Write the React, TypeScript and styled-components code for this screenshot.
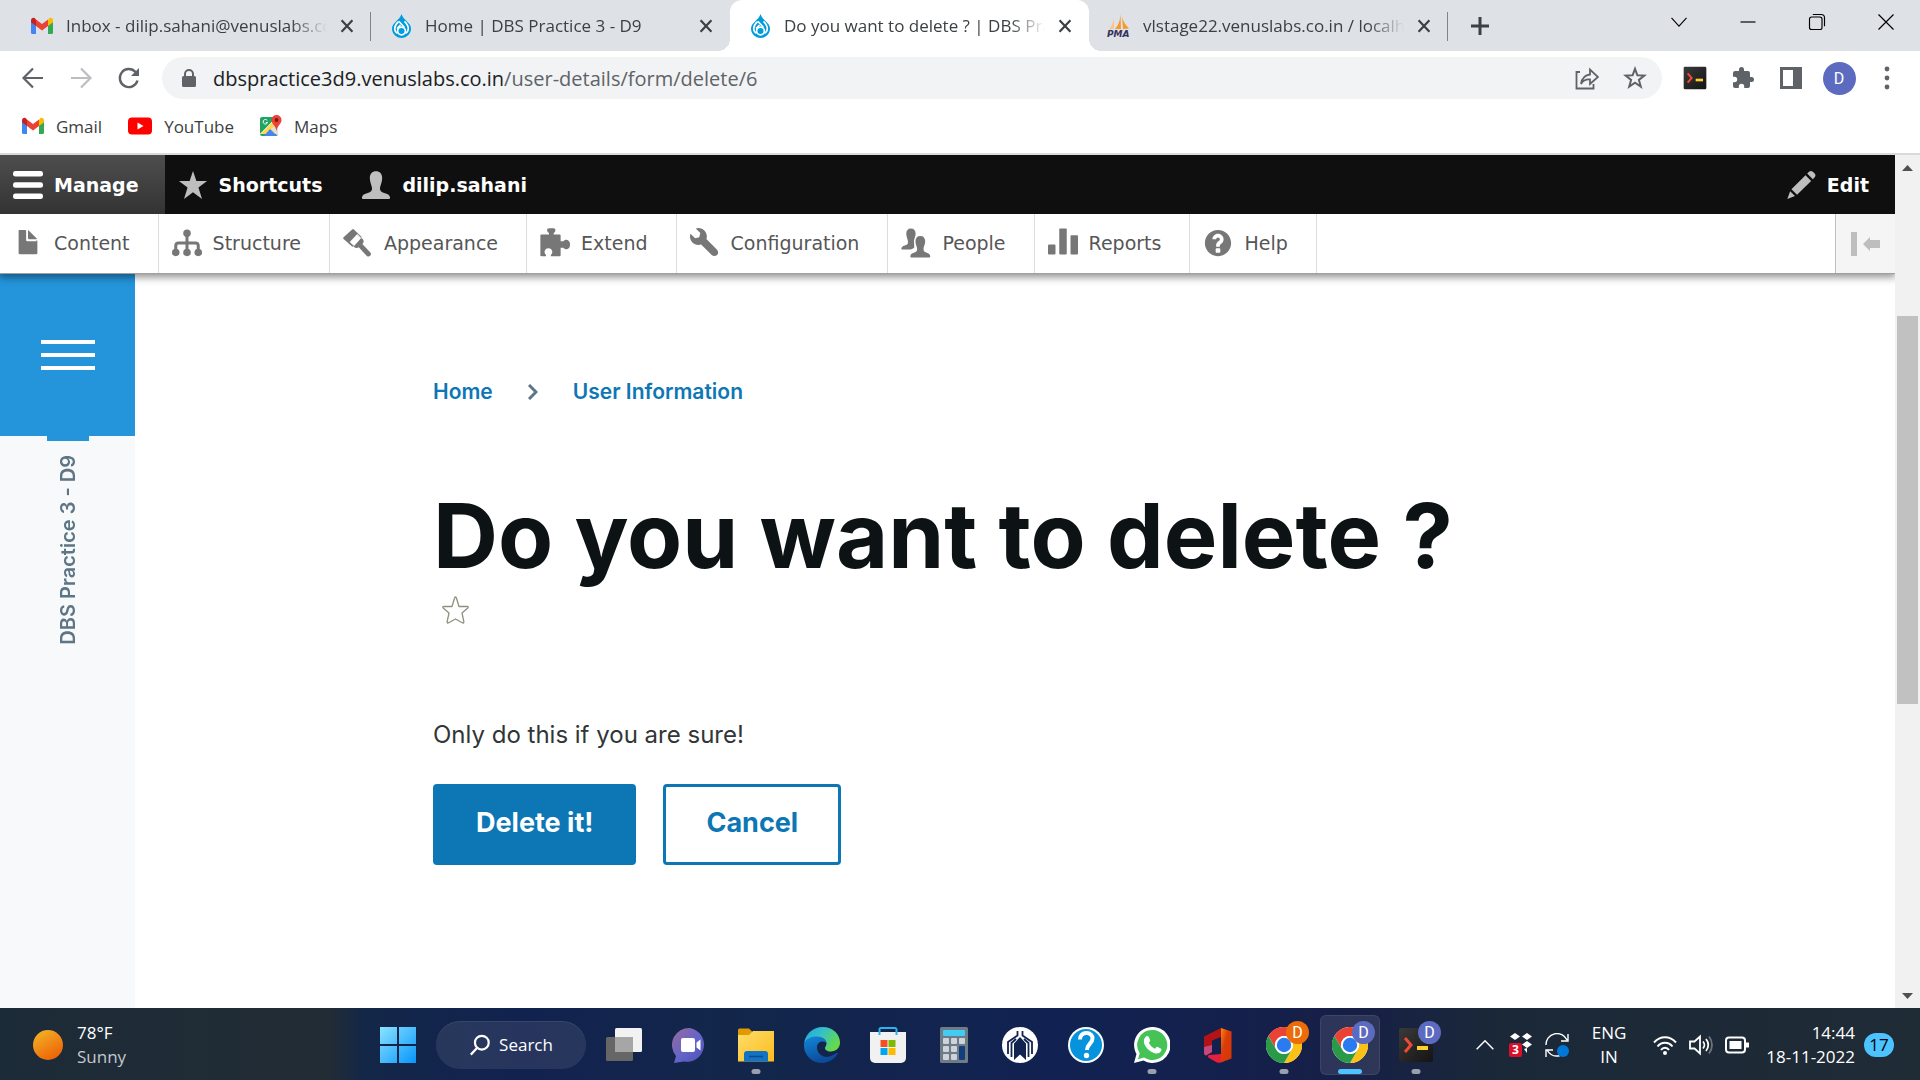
import React from "react";
import styled, { createGlobalStyle, css } from "styled-components";

const uiFont = `"Open Sans", "Noto Sans", sans-serif`;
const adminFont = `"DejaVu Sans", Verdana, sans-serif`;
const siteFont = `Inter, "Open Sans", sans-serif`;

const GlobalStyle = createGlobalStyle`
  *, *::before, *::after { box-sizing: border-box; }
  body { margin: 0; background: #fff; font-family: ${uiFont}; }
  button, input { font: inherit; color: inherit; border: 0; padding: 0; background: none; }
  button { cursor: pointer; }
  a { color: inherit; text-decoration: none; }
  svg { display: block; flex: none; }
  ul, ol { list-style: none; margin: 0; padding: 0; }
`;

const Screen = styled.div`
  display: flex;
  flex-direction: column;
  min-height: 100vh;
`;

/* ---------- browser: tab strip ---------- */

const TabStrip = styled.div`
  display: flex;
  height: 51px;
  padding-left: 12px;
  background: #dee1e6;
  color: #3c4043;
`;

const Tab = styled.div<{ $active?: boolean; $divided?: boolean }>`
  display: flex;
  align-items: center;
  flex: 0 1 359px;
  min-width: 0;
  padding: 0 12px 0 18px;
  font-size: 17px;
  position: relative;
  ${(p) =>
    p.$divided &&
    css`
      &::after {
        content: "";
        position: absolute;
        right: 0;
        top: 12px;
        width: 1px;
        height: 29px;
        background: #808489;
      }
    `}
  ${(p) =>
    p.$active &&
    css`
      background: #fff;
      border-radius: 12px 12px 0 0;
      &::before,
      &::after {
        content: "";
        position: absolute;
        bottom: 0;
        width: 12px;
        height: 12px;
      }
      &::before {
        left: -12px;
        background: radial-gradient(circle at 0 0, transparent 12px, #fff 12px);
      }
      &::after {
        right: -12px;
        background: radial-gradient(circle at 100% 0, transparent 12px, #fff 12px);
      }
    `}
`;

const Favicon = styled.span`
  display: grid;
  place-items: center;
  width: 24px;
  flex: none;
`;

const TabTitle = styled.span`
  flex: 1;
  min-width: 0;
  margin: 0 8px 0 12px;
  overflow: hidden;
  white-space: nowrap;
  mask-image: linear-gradient(to right, #000 calc(100% - 36px), transparent);
`;

const TabButton = styled.button`
  display: grid;
  place-items: center;
  width: 24px;
  height: 24px;
`;

const NewTab = styled(TabButton)`
  width: 64px;
  height: 51px;
`;

const WindowControls = styled.div`
  display: flex;
  margin-left: auto;
  height: 44px;
  color: #000;
`;

const WindowButton = styled.button`
  display: grid;
  place-items: center;
  width: 69px;
`;

/* ---------- browser: address bar ---------- */

const AddressRow = styled.div`
  display: flex;
  align-items: center;
  height: 54px;
  padding: 0 9px;
  background: #fff;
  color: #5f6368;
`;

const ToolButton = styled.button`
  display: grid;
  place-items: center;
  width: 48px;
  height: 48px;
`;

const AddressBox = styled.label`
  display: flex;
  align-items: center;
  flex: 1;
  height: 42px;
  margin: 0 9px;
  padding: 0 3px 0 18px;
  border-radius: 21px;
  background: #f1f3f4;
  font-size: 20px;
`;

const Host = styled.span`
  margin-left: 15px;
  color: #202124;
`;

const PathInput = styled.input`
  flex: 1;
  min-width: 0;
  outline: 0;
  color: #5f6368;
`;

const Avatar = styled.span<{ $color: string; $size: number }>`
  display: grid;
  place-items: center;
  width: ${(p) => p.$size}px;
  height: ${(p) => p.$size}px;
  border-radius: 50%;
  background: ${(p) => p.$color};
  color: #fff;
  font-family: Roboto, sans-serif;
  font-size: 16px;
`;

const Bookmarks = styled.nav`
  display: flex;
  align-items: center;
  gap: 26px;
  height: 50px;
  padding: 0 22px 6px;
  border-bottom: 2px solid #dadada;
  background: #fff;
  color: #3c4043;
  font-size: 17px;
`;

const Bookmark = styled.a`
  display: flex;
  align-items: center;
  gap: 12px;
`;

/* ---------- viewport ---------- */

const Viewport = styled.div`
  display: flex;
  flex: 1;
`;

const Page = styled.div`
  display: flex;
  flex-direction: column;
  flex: 1;
  min-width: 0;
  background: #fff;
`;

const ScrollTrack = styled.div`
  display: flex;
  flex-direction: column;
  align-items: center;
  width: 25px;
  padding: 10px 0 9px;
  background: #f1f1f1;
`;

const ScrollThumb = styled.div`
  width: 21px;
  flex: 388;
  background: #c1c1c1;
`;

const ScrollGap = styled.div<{ $grow: number }>`
  flex: ${(p) => p.$grow};
`;

/* ---------- admin toolbar ---------- */

const AdminToolbar = styled.header`
  position: relative;
  z-index: 1;
  font-family: ${adminFont};
  font-size: 19px;
  box-shadow: 0 1px 0 #a0a0a0, 0 3px 8px 1px rgba(0, 0, 0, 0.45);
  clip-path: inset(0 0 -16px 0);
`;

const AdminBar = styled.nav`
  display: flex;
  height: 59px;
  background: #0f0f0f;
  color: #fff;
  font-weight: 700;
`;

const AdminTab = styled.button<{ $open?: boolean; $end?: boolean }>`
  display: flex;
  align-items: center;
  gap: 11px;
  padding: 0 26px 0 13px;
  margin-left: ${(p) => (p.$end ? "auto" : "0")};
  background: ${(p) => (p.$open ? "linear-gradient(#4e4e4e, #333)" : "none")};
`;

const AdminTray = styled.nav`
  display: flex;
  height: 59px;
  background: #fff;
  color: #565656;
`;

const TrayList = styled.ul`
  display: flex;
  flex: 1;
`;

const TrayLink = styled.a`
  display: flex;
  align-items: center;
  gap: 11px;
  height: 100%;
  padding: 0 28px 2px 13px;
  border-right: 1px solid #ddd;
`;

const TrayToggle = styled.button`
  display: grid;
  place-items: center;
  width: 60px;
  border-left: 1px solid #bfbfbf;
  background: #f5f5f5;
`;

/* ---------- site ---------- */

const SiteBody = styled.div`
  display: flex;
  flex: 1;
  font-family: ${siteFont};
`;

const SiteRail = styled.aside`
  display: flex;
  flex-direction: column;
  align-items: center;
  width: 135px;
  background: #f7f9fa;
`;

const RailButton = styled.button`
  display: flex;
  flex-direction: column;
  align-items: center;
  justify-content: center;
  gap: 9px;
  width: 100%;
  height: 163px;
  background: #2494db;
`;

const RailBar = styled.span`
  width: 54px;
  height: 4px;
  background: #fff;
`;

const RailNotch = styled.span`
  width: 42px;
  height: 5px;
  background: #2494db;
`;

const RailName = styled.a`
  margin-top: 14px;
  writing-mode: vertical-rl;
  transform: rotate(180deg);
  color: #5d7585;
  font-size: 20px;
  font-weight: 600;
  line-height: 24px;
`;

const Main = styled.main`
  flex: 1;
  padding: 103px 48px 0 298px;
`;

const Crumbs = styled.ol`
  display: flex;
  align-items: center;
  gap: 35px;
  color: #0d77b5;
  font-size: 21px;
  font-weight: 600;
  line-height: 32px;
`;

const Title = styled.h1`
  margin: 74px 0 0;
  color: #0d1214;
  font-size: 90px;
  font-weight: 700;
  line-height: 108px;
`;

const Favourite = styled.button`
  display: block;
  margin: 6px 9px 0;
  height: 28px;
`;

const Message = styled.p`
  margin: 95px 0 0;
  color: #313637;
  font-size: 24px;
  line-height: 32px;
`;

const Actions = styled.div`
  display: flex;
  gap: 27px;
  margin-top: 33px;
`;

const Action = styled.button<{ $primary?: boolean }>`
  height: 81px;
  padding: 0 40px 4px;
  border: 3px solid #0d77b5;
  border-radius: 4px;
  background: ${(p) => (p.$primary ? "#0d77b5" : "#fff")};
  color: ${(p) => (p.$primary ? "#fff" : "#0d77b5")};
  font-size: 27px;
  font-weight: 700;
`;

/* ---------- taskbar ---------- */

const Taskbar = styled.footer`
  display: flex;
  align-items: stretch;
  height: 72px;
  padding: 2px 26px 0 33px;
  background: linear-gradient(90deg, #1c2b38 0, #222c34 17%, #132748 19%, #12224f 27%, #13264a 38%, #112252 55%, #161f47 70%, #1b2838 78%, #1f2b35 100%);
  color: #fff;
  font-size: 17px;
  line-height: 24px;
`;

const Weather = styled.button`
  display: flex;
  align-items: center;
  gap: 14px;
  text-align: left;
`;

const Stack = styled.span<{ $align?: string }>`
  display: flex;
  flex-direction: column;
  text-align: ${(p) => p.$align || "left"};
`;

const Muted = styled.span`
  color: #c4c8cb;
`;

const Apps = styled.div`
  display: flex;
  align-items: center;
  margin: 0 18px 0 auto;
`;

const AppSlot = styled.button<{ $active?: boolean }>`
  position: relative;
  display: grid;
  place-items: center;
  width: 60px;
  height: 60px;
  margin: 0 3px;
  border-radius: 6px;
  background: ${(p) => (p.$active ? "rgba(255,255,255,0.1)" : "none")};
  box-shadow: ${(p) => (p.$active ? "inset 0 0 0 1px rgba(255,255,255,0.08)" : "none")};
`;

const RunMark = styled.span<{ $active?: boolean }>`
  position: absolute;
  bottom: 1px;
  left: 50%;
  width: ${(p) => (p.$active ? 24 : 9)}px;
  height: 5px;
  transform: translateX(-50%);
  border-radius: 3px;
  background: ${(p) => (p.$active ? "#4cc2ff" : "#9a9fae")};
`;

const AppBadge = styled.span`
  position: absolute;
  top: 6px;
  right: 5px;
`;

const SearchButton = styled.button`
  display: flex;
  align-items: center;
  justify-content: center;
  gap: 8px;
  width: 150px;
  height: 48px;
  margin: 0 5px;
  border-radius: 24px;
  background: rgba(255, 255, 255, 0.09);
  box-shadow: inset 0 1px 0 rgba(255, 255, 255, 0.08);
`;

const Tray = styled.div`
  display: flex;
  align-items: center;
`;

const TrayButton = styled.button<{ $width?: number; $end?: boolean }>`
  display: grid;
  place-items: center;
  justify-items: ${(p) => (p.$end ? "end" : "center")};
  width: ${(p) => p.$width || 36}px;
  height: 60px;
`;

const StatusGroup = styled.div`
  display: flex;
  padding-left: 4px;
`;

const Count = styled.span`
  display: grid;
  place-items: center;
  width: 30px;
  height: 24px;
  margin-left: 9px;
  border-radius: 12px;
  background: #4cc2ff;
  color: #000;
`;

/* ---------- icons ---------- */

const Stroke = ({ size = 24, w = 2, children }: { size?: number; w?: number; children: React.ReactNode }) => (
  <svg width={size} height={size} viewBox="0 0 24 24" fill="none" stroke="currentColor" strokeWidth={w} aria-hidden>
    {children}
  </svg>
);

const GmailIcon = () => (
  <svg width="22" height="22" viewBox="0 0 22 22" aria-hidden>
    <path d="M0 5v12.500a1.500 1.500 0 0 0 1.500 1.500H5V8.500z" fill="#4285f4" />
    <path d="M22 5v12.500a1.500 1.500 0 0 1-1.500 1.500H17V8.500z" fill="#34a853" />
    <path d="M17 5v6l5-3.800V5.200c0-2-2.200-3.200-3.800-2z" fill="#fbbc04" />
    <path d="M5 11V4.500l6 4.500 6-4.500V11l-6 4.600z" fill="#ea4335" />
    <path d="M0 5.200v2L5 11V4.500L3.800 3.200C2.200 2 0 3.200 0 5.200z" fill="#c5221f" />
  </svg>
);

const DrupalIcon = () => (
  <svg width="19" height="24" viewBox="0 0 19 24" aria-hidden>
    <path d="M9.500 0c.8 3 3 5 5.200 7.200C17 9.400 19 11.500 19 14.600 19 20 14.700 24 9.500 24S0 20 0 14.600c0-3.100 2-5.200 4.300-7.400C6.500 5 8.700 3 9.500 0z" fill="#009cde" />
    <circle cx="9.500" cy="17" r="3.900" fill="none" stroke="#fff" strokeWidth="1.700" />
    <path d="M6.800 7.200l5.700 6.300M12.500 7.400c2 2 3.800 4 3.800 7 0 2-1 3.800-2.800 5M8.500 11L5 14.500M6.500 7.600c-2 1.800-3.800 4-3.800 6.800 0 2 1 3.800 2.800 5" fill="none" stroke="#fff" strokeWidth="1.600" />
  </svg>
);

const PmaIcon = () => (
  <svg width="24" height="24" viewBox="0 0 24 24" aria-hidden>
    <path d="M7 3C6.500 8 5 12 2 15.500l5-1z" fill="#f9c58a" />
    <path d="M13.500 0c-.5 7-2 11-5.500 15h6zM15 2c.5 5 3.500 9 7 12.500l-6 .5z" fill="#f7982b" />
    <text x="0" y="23" fontFamily="DejaVu Sans" fontSize="9" fontWeight="700" fontStyle="italic" fill="#33335c">PMA</text>
  </svg>
);

const CloseIcon = () => (
  <Stroke size={20} w={2.600}><path d="M5.500 5l13 14M18.500 5l-13 14" /></Stroke>
);

const YoutubeIcon = () => (
  <svg width="24" height="18" viewBox="0 0 24 18" aria-hidden>
    <rect y="0.500" width="24" height="17" rx="4" fill="#f00" />
    <path d="M9.500 5.500v7l6-3.500z" fill="#fff" />
  </svg>
);

const MapsIcon = () => (
  <svg width="22" height="22" viewBox="0 0 22 22" aria-hidden>
    <rect x="0" y="2" width="18" height="19" rx="2" fill="#1fa463" />
    <path d="M0 19L17 2v17z" fill="#ffd54a" />
    <path d="M4 21l6-7 7 7z" fill="#4285f4" />
    <path d="M18 8v11a2 2 0 0 1-.6 1.400L11 14z" fill="#e0e0e0" />
    <path d="M0 19.500L15 4" stroke="#fff" strokeWidth=".8" />
    <path d="M7.300 5.500A2.300 2.300 0 1 0 7.600 7.500H5.700" fill="none" stroke="#fff" strokeWidth="1" />
    <path d="M16.500 0a5 5 0 0 1 5 5c0 4-4 5-5 11-1-6-5-7-5-11a5 5 0 0 1 5-5z" fill="#ea4335" />
    <circle cx="16.500" cy="5" r="1.900" fill="#811411" />
  </svg>
);

const Solid = ({ size = 24, box = 24, children }: { size?: number; box?: number; children: React.ReactNode }) => (
  <svg width={size} height={size} viewBox={`0 0 ${box} ${box}`} fill="currentColor" aria-hidden>{children}</svg>
);

const PuzzlePath = "M20.500 11H19V7a2 2 0 0 0-2-2h-4V3.500a2.500 2.500 0 0 0-5 0V5H4a2 2 0 0 0-2 2v3.800h1.500a2.700 2.700 0 0 1 0 5.400H2V20a2 2 0 0 0 2 2h3.800v-1.500a2.700 2.700 0 0 1 5.400 0V22H17a2 2 0 0 0 2-2v-4h1.500a2.500 2.500 0 0 0 0-5z";

const TerminalIcon = ({ size }: { size: number }) => (
  <svg width={size} height={size} viewBox="0 0 36 36" aria-hidden>
    <defs><linearGradient id="term" x2="1" y2="1"><stop stopColor="#3a3a3a" /><stop offset="1" stopColor="#141414" /></linearGradient></defs>
    <rect x="1" y="1" width="34" height="34" rx="2" fill="url(#term)" />
    <path d="M7 11l6 7-6 7" fill="none" stroke="#f04b32" strokeWidth="3" />
    <rect x="19" y="19" width="11" height="4" fill="#ffd02e" />
  </svg>
);

const AdminIcon = ({ color, children }: { color: string; children: React.ReactNode }) => (
  <svg width="30" height="30" viewBox="0 0 16 16" fill={color} aria-hidden>{children}</svg>
);

const adminIcons = {
  menu: <><rect y="0.500" width="16" height="3" rx="1.300" /><rect y="6.500" width="16" height="3" rx="1.300" /><rect y="12.500" width="16" height="3" rx="1.300" /></>,
  star: <path d="M8 .5l1.800 5.300H15.500l-4.600 3.500 1.900 6.200L8 11.800l-4.800 3.700 1.900-6.200L.5 5.800h5.700z" />,
  person: <path d="M8 .6c2 0 3.300 1.300 3.300 3.700 0 2.500-1.200 4.200-1.200 5.600 0 1.500.9 2 2.700 2.500 1.700.4 2.500 1 2.700 2.300 0 .5-.2.800-.7.800H1.200c-.5 0-.7-.3-.7-.8.2-1.300 1-1.900 2.700-2.300 1.800-.5 2.700-1 2.700-2.500 0-1.400-1.200-3.100-1.200-5.600C4.700 1.900 6 .6 8 .6z" />,
  pencil: <><path d="M11.300 1.900l1-1c.6-.6 1.400-.5 2 0l1 1c.5.6.6 1.400 0 2l-1 1z" /><path d="M10.400 2.800l3 3-7.500 7.400-3-3zM2.200 11.300l2.600 2.600L.7 15.400z" /></>,
  content: <><path d="M12.502 7h-5c-.276 0-.502-.225-.502-.5v-5c0-.275-.225-.5-.5-.5h-3c-.275 0-.5.225-.5.5v12.029c0 .275.225.5.5.5h9.002c.275 0 .5-.225.5-.5v-6.529c0-.275-.225-.5-.5-.5z" /><path d="M8.502 6h4c.275 0 .34-.159.146-.354l-4.293-4.292c-.195-.195-.353-.129-.353.146v4c0 .275.225.5.5.500z" /></>,
  structure: <><circle cx="8" cy="2.800" r="2" /><circle cx="2" cy="13" r="2" /><circle cx="8" cy="13" r="2" /><circle cx="14" cy="13" r="2" /><path d="M7.200 4h1.600v9H7.200z" /><path d="M2 12.500V9.500c0-1 .5-1.500 1.500-1.500h9c1 0 1.500.5 1.500 1.500v3" fill="none" stroke="#777" strokeWidth="1.600" /></>,
  appearance: <><path d="M5.500.5L10 4.800 5 10 .3 5.800c-.3-.3-.2-.6 0-.9L5 .6z" /><path d="M7.600 3.200l2.600 2.400-4.100 4.200-2.500-2.400z" fill="#fff" /><path d="M7.200 3.400l3.300 2.400c.8.9.6 2-.2 2.700l4.300 4.600c1 1.200-.7 2.900-1.900 1.800L8.400 10.200c-.9.700-1.900.5-2.600-.2L4.400 8.600l1.500 1L9.600 5.500z" /></>,
  extend: <path d="M15.500 7c-1-1-2.300-.9-3 .1H11V4c0-.3-.2-.5-.5-.5H7.300V2.700C8.500 2 8.300.5 7.800.3c-.6-.3-3-.3-3.600 0-.5.2-.7 1.700.6 2.400v.8H.8c-.3 0-.6.2-.6.500v10.500c0 .3.300.5.600.5h2.400v-.7c-1.300-.7-1-3.500 1.300-3.500s2.600 2.800 1.300 3.500v.7h4.700c.3 0 .5-.2.500-.5v-4h1.500c.7 1 2 1.100 3 .1.700-.8.700-2.800 0-3.600z" />,
  config: <path d="M14.416 11.586l-5.666-5.665c.15-.449.252-.921.252-1.421 0-2.485-2.016-4.500-4.502-4.500-.505 0-.981.102-1.434.255l2.431 2.431-.588 2.196-2.196.588-2.445-2.445c-.162.464-.268.956-.268 1.475 0 2.486 2.014 4.500 4.500 4.500.5 0 .972-.102 1.421-.251l5.667 5.665c.781.781 2.047.781 2.828 0s.781-2.047 0-2.828z" />,
  people: <><path d="M5.300.2c1.600 0 2.500 1 2.500 2.900 0 1.500-.9 3-.9 4l.2 3.200C6.600 11 5.700 11.400 5 11.500H.7c-.4 0-.6-.3-.5-.7.3-1.500 2.700-1.500 3.300-2.300.8-1.200-.7-3.500-.7-5.400 0-1.900.9-2.900 2.500-2.900z" /><path d="M10.300 4.200c1.700 0 2.600 1 2.600 3 0 1.600-1 2.800-.9 4.200.1 2.200 3.400 1.200 3.600 3.600 0 .4-.2.700-.6.700H5.600c-.4 0-.6-.3-.6-.7.2-2.400 3.500-1.400 3.600-3.600.1-1.400-.9-2.600-.9-4.200 0-2 .9-3 2.600-3z" /></>,
  reports: <><rect y="8.800" width="4" height="5.300" rx=".5" /><rect x="6" y=".2" width="4" height="13.900" rx=".5" /><rect x="12" y="3.800" width="4" height="10.300" rx=".5" /></>,
  help: <path d="M8.002 1c-3.868 0-7.002 3.134-7.002 7s3.134 7 7.002 7c3.865 0 7-3.134 7-7s-3.135-7-7-7zm3 5c0 .551-.16 1.085-.477 1.586l-.158.22c-.07.093-.189.241-.361.393-.168.148-.35.299-.545.447l-.203.189-.141.129-.096.17-.021.235v.63h-2.001v-.704c.026-.396.078-.73.204-.999.125-.269.271-.498.439-.688l.225-.21-.01-.015.176-.14.137-.128c.186-.139.357-.277.516-.417l.148-.18c.098-.152.168-.323.168-.518 0-.552-.447-1-1.002-1-.548 0-.998.448-.998 1h-2.002c0-1.657 1.343-3 3-3s3.002 1.343 3.002 3zm-1.750 6.619c0 .344-.281.625-.625.625h-1.250c-.345 0-.626-.281-.626-.625v-1.238c0-.344.281-.625.626-.625h1.250c.344 0 .625.281.625.625v1.238z" />,
};

const trayItems: [keyof typeof adminIcons, string][] = [
  ["content", "Content"],
  ["structure", "Structure"],
  ["appearance", "Appearance"],
  ["extend", "Extend"],
  ["config", "Configuration"],
  ["people", "People"],
  ["reports", "Reports"],
  ["help", "Help"],
];

const App36 = ({ children }: { children: React.ReactNode }) => (
  <svg width="36" height="36" viewBox="0 0 36 36" aria-hidden>{children}</svg>
);

const ChromeIcon = () => (
  <App36>
    <circle cx="18" cy="18" r="18" fill="#fff" />
    <path d="M2.400 9A18 18 0 0 1 33.600 9H18a9 9 0 0 0-7.800 13.500z" fill="#ea4335" />
    <path d="M33.600 9A18 18 0 0 1 18 36l7.800-13.500A9 9 0 0 0 18 9z" fill="#fbc116" />
    <path d="M18 36A18 18 0 0 1 2.400 9l7.800 13.500a9 9 0 0 0 15.600 0z" fill="#2b9a48" />
    <circle cx="18" cy="18" r="9" fill="#fff" />
    <circle cx="18" cy="18" r="7.200" fill="#2a7bf0" />
  </App36>
);

type TaskApp = { name: string; icon: React.ReactNode; running?: boolean; active?: boolean; badge?: string };

const taskApps: TaskApp[] = [
  { name: "Task view", icon: <App36><rect x="0" y="10" width="27" height="24" rx="1.500" fill="#666" /><rect x="9" y="1" width="27" height="24" rx="1.500" fill="#f2f2f2" /><rect x="9" y="10" width="18" height="15" fill="#a6a6a6" /></App36> },
  { name: "Chat", icon: <App36><defs><linearGradient id="chat" x2="1" y2="1"><stop stopColor="#9a6a9c" /><stop offset=".55" stopColor="#6264c9" /><stop offset="1" stopColor="#5050b8" /></linearGradient></defs><path d="M18 1a17 17 0 1 1-6 33.500L2 36l2-7A17 17 0 0 1 18 1z" fill="url(#chat)" /><rect x="9" y="11" width="14" height="14" rx="2" fill="#fff" /><path d="M24.500 15.500l4-3v11l-4-3z" fill="#fff" /></App36> },
  { name: "File Explorer", running: true, icon: <App36><path d="M0 3a1.500 1.500 0 0 1 1.500-1.500H11l4 4v5H0z" fill="#e09a04" /><defs><linearGradient id="folder" x2="1" y2="1"><stop stopColor="#ffdd6b" /><stop offset="1" stopColor="#fbbc1c" /></linearGradient></defs><path d="M0 8h11l4-4h21v30.500H0z" fill="url(#folder)" /><path d="M6 34.500V27a3 3 0 0 1 3-3h18a3 3 0 0 1 3 3v7.500z" fill="#1272c4" /><path d="M11 29.500h14" stroke="#0a4a91" strokeWidth="1.500" /></App36> },
  { name: "Edge", icon: <App36><defs><linearGradient id="edgeTop" x2="1" y2=".5"><stop stopColor="#1fa2e0" /><stop offset=".5" stopColor="#35c1c8" /><stop offset="1" stopColor="#66d94a" /></linearGradient><linearGradient id="edgeLow" y2="1" x2=".4"><stop stopColor="#1188d8" /><stop offset="1" stopColor="#0c4a9a" /></linearGradient></defs><path d="M0 17C1 7 9 0 18.500 0 29 0 36 7.500 36 15.500c0 5.500-4 9-9 9-4.500 0-6-2-6-3.500 0-1.300 1.500-2 1.500-4.500 0-3.500-4-6.500-9-6.500C7 10 2 12.500 0 17z" fill="url(#edgeTop)" /><path d="M0 17C2 12 7 9.500 13 9.500c5.500 0 9.500 3 9.500 7-1.500-3-9-3-9.500 3.500-.5 6 6 11.500 12.500 9.500 3-.8 5.500-2.500 7-3.500 1-.5 1.300.3.800 1C30 32.500 24.500 36 18 36 8 36-.8 28 0 17z" fill="url(#edgeLow)" /></App36> },
  { name: "Microsoft Store", icon: <App36><path d="M9.500 8V2.500A1.500 1.500 0 0 1 11 1h14a1.500 1.500 0 0 1 1.500 1.500V8" fill="none" stroke="#2fb0ee" strokeWidth="2" /><path d="M0 5h36v26a5 5 0 0 1-5 5H5a5 5 0 0 1-5-5z" fill="#f1f1f2" /><path d="M9.500 5v3M26.500 5v3" stroke="#2fb0ee" strokeWidth="2" /><path d="M10.500 13h7v7h-7z" fill="#f25022" /><path d="M18.500 13h7v7h-7z" fill="#7fba00" /><path d="M10.500 21h7v7h-7z" fill="#00a4ef" /><path d="M18.500 21h7v7h-7z" fill="#ffb900" /></App36> },
  { name: "Calculator", icon: <App36><rect x="4" y="0" width="28" height="36" rx="1.500" fill="#6f7b85" /><rect x="7" y="3" width="22" height="6" rx="1" fill="#41ccf5" /><g fill="#cdd3da"><rect x="7" y="11" width="6" height="6" rx="1" /><rect x="15" y="11" width="6" height="6" rx="1" /><rect x="23" y="11" width="6" height="6" rx="1" /><rect x="7" y="19" width="6" height="6" rx="1" /><rect x="15" y="19" width="6" height="6" rx="1" /><rect x="7" y="27" width="6" height="6" rx="1" /><rect x="15" y="27" width="6" height="6" rx="1" /></g><rect x="23" y="19" width="6" height="14" rx="1" fill="#123f7c" /></App36> },
  { name: "Assistant", icon: <App36><circle cx="18" cy="18" r="18" fill="#fff" /><g fill="none" stroke="#122350" strokeWidth="1.800"><path d="M15.500 4v4.500L6 15v12M20.500 4v4.500L30 15v12" /><path d="M14 12l-4.500 4v14M22 12l4.500 4v14" /></g><path d="M18 10l6 6.500V33l-6-5.500-6 5.500V16.500z" fill="#122350" /></App36> },
  { name: "Get Help", icon: <App36><circle cx="18" cy="18" r="18" fill="#fff" /><circle cx="18" cy="18" r="16" fill="#0493dc" /><path d="M12 12.500c0-4 2.500-6.500 6.500-6.500s6 2.500 6 5.500c0 5-5.500 5.500-5.500 11.500" fill="none" stroke="#fff" strokeWidth="4" /><circle cx="18.500" cy="28.500" r="2.700" fill="#fff" /></App36> },
  { name: "WhatsApp", running: true, icon: <App36><path d="M18 0a18 18 0 1 1-8.500 33.500L0 36l2.500-9A18 18 0 0 1 18 0z" fill="#fff" /><path d="M18 3a15 15 0 1 1-8 27.500l-6 1.700 1.700-6A15 15 0 0 1 18 3z" fill="#45c355" /><path d="M12 9.500c1-.8 2.300-.6 2.800.5l1.300 3c.3.800-.2 1.500-1.300 2.800 1.500 3 3.600 4.800 6.200 6 1.200-1.500 1.800-2.300 2.700-1.900l3 1.500c1 .5.900 1.500.2 2.800-1.400 2.300-4.200 2.700-7 1.700-5-1.800-8-5-9.500-8.600-1-2.800-.7-6 1.600-7.800z" fill="#fff" /></App36> },
  { name: "Office", icon: <App36><defs><linearGradient id="office" y2="1"><stop stopColor="#f78a10" /><stop offset=".4" stopColor="#dc3c0a" /><stop offset="1" stopColor="#d53506" /></linearGradient></defs><path d="M21 1l10.500 3.500v27L21 35.500z" fill="url(#office)" /><path d="M21 1v9l-9 3.500V25l-6 3.500c-1.500-.8-2-1.500-2-3V9.500z" fill="#b31217" /><path d="M9 28l12-1v8.500c-1 .4-3 .4-4 0L9 31c-1.500-1-1.500-2.500 0-3z" fill="#e5203d" /><path d="M12 18v7l-6 3.500c-1.500-.8-2-1.500-2-3V20z" fill="#c6487f" /></App36> },
  { name: "Chrome profile 1", running: true, icon: <ChromeIcon />, badge: "#ec6c07" },
  { name: "Chrome profile 2", running: true, active: true, icon: <ChromeIcon />, badge: "#5c6bc0" },
  { name: "Terminal", running: true, icon: <TerminalIcon size={36} />, badge: "#5c6bc0" },
];

export default function App() {
  return (
    <Screen>
      <GlobalStyle />
      <TabStrip>
        <Tab $divided>
          <Favicon><GmailIcon /></Favicon>
          <TabTitle>Inbox - dilip.sahani@venuslabs.co.in</TabTitle>
          <TabButton aria-label="Close tab"><CloseIcon /></TabButton>
        </Tab>
        <Tab>
          <Favicon><DrupalIcon /></Favicon>
          <TabTitle>Home | DBS Practice 3 - D9</TabTitle>
          <TabButton aria-label="Close tab"><CloseIcon /></TabButton>
        </Tab>
        <Tab $active>
          <Favicon><DrupalIcon /></Favicon>
          <TabTitle>Do you want to delete ? | DBS Practice 3</TabTitle>
          <TabButton aria-label="Close tab"><CloseIcon /></TabButton>
        </Tab>
        <Tab $divided>
          <Favicon><PmaIcon /></Favicon>
          <TabTitle>vlstage22.venuslabs.co.in / localhost</TabTitle>
          <TabButton aria-label="Close tab"><CloseIcon /></TabButton>
        </Tab>
        <NewTab aria-label="New tab"><Stroke size={24} w={3}><path d="M12 3v18M3 12h18" /></Stroke></NewTab>
        <WindowControls>
          <WindowButton aria-label="Search tabs"><Stroke size={20} w={1.300}><path d="M3 7l9 10 9-10" /></Stroke></WindowButton>
          <WindowButton aria-label="Minimize"><Stroke size={20} w={1.400}><path d="M3 12h18" /></Stroke></WindowButton>
          <WindowButton aria-label="Restore"><Stroke size={20} w={1.400}><rect x="3" y="6" width="15" height="15" rx="2.500" /><path d="M7 3h10a4 4 0 0 1 4 4v10" /></Stroke></WindowButton>
          <WindowButton aria-label="Close"><Stroke size={20} w={1.400}><path d="M3 3l18 18M21 3L3 21" /></Stroke></WindowButton>
        </WindowControls>
      </TabStrip>

      <AddressRow>
        <ToolButton aria-label="Back"><Stroke w={2.200}><path d="M22 12H3M12 2.500L2.500 12l9.500 9.500" /></Stroke></ToolButton>
        <ToolButton aria-label="Forward"><svg width="24" height="24" viewBox="0 0 24 24" fill="none" stroke="#bcbec1" strokeWidth="2.200" aria-hidden><path d="M2 12h19M12 2.500l9.500 9.500-9.500 9.500" /></svg></ToolButton>
        <ToolButton aria-label="Reload"><Stroke w={2.400}><path d="M20.500 14.500A9 9 0 1 1 18.500 6l2 2" /><path d="M22 2v8h-8z" fill="currentColor" stroke="none" /></Stroke></ToolButton>
        <AddressBox>
          <Solid size={18} box={18}><path d="M4 7V5a5 5 0 0 1 10 0v2h.500A1.500 1.500 0 0 1 16 8.500v8a1.500 1.500 0 0 1-1.500 1.500h-11A1.500 1.500 0 0 1 2 16.500v-8A1.500 1.500 0 0 1 3.500 7zm2 0h6V5a3 3 0 0 0-6 0z" /></Solid>
          <Host>dbspractice3d9.venuslabs.co.in</Host>
          <PathInput aria-label="Address" defaultValue="/user-details/form/delete/6" />
          <ToolButton aria-label="Share"><Stroke w={1.800}><path d="M5 6H1.500v16.500h17V18" /><path d="M6 18c1-6 4-9 9-9.500V3.500L23 11l-8 7v-4.500c-4-.3-7 1-9 4.500z" /></Stroke></ToolButton>
          <ToolButton aria-label="Bookmark"><Stroke w={2}><path d="M12 2.800l2.400 6.500 6.900.3-5.400 4.300 1.900 6.700-5.800-3.900-5.800 3.900 1.900-6.700-5.400-4.300 6.900-.3z" /></Stroke></ToolButton>
        </AddressBox>
        <ToolButton aria-label="Terminal extension"><TerminalIcon size={24} /></ToolButton>
        <ToolButton aria-label="Extensions"><Solid><path d={PuzzlePath} /></Solid></ToolButton>
        <ToolButton aria-label="Side panel"><Solid size={22} box={22}><path fillRule="evenodd" d="M0 0h22v22H0zM3 3v16h10V3z" /></Solid></ToolButton>
        <ToolButton aria-label="Profile"><Avatar $color="#5c6bc0" $size={33}>D</Avatar></ToolButton>
        <ToolButton aria-label="Menu"><Solid><circle cx="12" cy="3" r="2.400" /><circle cx="12" cy="12" r="2.400" /><circle cx="12" cy="21" r="2.400" /></Solid></ToolButton>
      </AddressRow>

      <Bookmarks>
        <Bookmark href="#gmail"><GmailIcon />Gmail</Bookmark>
        <Bookmark href="#youtube"><YoutubeIcon />YouTube</Bookmark>
        <Bookmark href="#maps"><MapsIcon />Maps</Bookmark>
      </Bookmarks>

      <Viewport>
        <Page>
          <AdminToolbar>
            <AdminBar>
              <AdminTab $open><AdminIcon color="#fff">{adminIcons.menu}</AdminIcon>Manage</AdminTab>
              <AdminTab><AdminIcon color="#bebebe">{adminIcons.star}</AdminIcon>Shortcuts</AdminTab>
              <AdminTab><AdminIcon color="#bebebe">{adminIcons.person}</AdminIcon>dilip.sahani</AdminTab>
              <AdminTab $end><AdminIcon color="#bebebe">{adminIcons.pencil}</AdminIcon>Edit</AdminTab>
            </AdminBar>
            <AdminTray>
              <TrayList>
                {trayItems.map(([icon, label]) => (
                  <li key={label}>
                    <TrayLink href={`#${icon}`}><AdminIcon color="#777">{adminIcons[icon]}</AdminIcon>{label}</TrayLink>
                  </li>
                ))}
              </TrayList>
              <TrayToggle aria-label="Vertical orientation">
                <svg width="29" height="24" viewBox="0 0 29 24" fill="#bebebe" aria-hidden><path d="M0 0h6v24H0zM12 12l7-7v3h10v8H19v3z" /></svg>
              </TrayToggle>
            </AdminTray>
          </AdminToolbar>

          <SiteBody>
            <SiteRail>
              <RailButton aria-label="Menu"><RailBar /><RailBar /><RailBar /></RailButton>
              <RailNotch />
              <RailName href="#home">DBS Practice 3 - D9</RailName>
            </SiteRail>
            <Main>
              <nav aria-label="Breadcrumb">
                <Crumbs>
                  <li><a href="#home">Home</a></li>
                  <li aria-hidden><svg width="10" height="16" viewBox="0 0 10 16" fill="none" stroke="#5d7585" strokeWidth="3"><path d="M1 1l7 7-7 7" /></svg></li>
                  <li><a href="#user-information">User Information</a></li>
                </Crumbs>
              </nav>
              <Title>Do you want to delete ?</Title>
              <Favourite aria-label="Add to shortcuts">
                <svg width="27" height="28" viewBox="0 0 27 28" fill="none" stroke="#918f7e" strokeWidth="1.300" strokeLinejoin="round"><path d="M13.500 1c.6 0 .7.500 1 1.200L17 10.500h8c1.400 0 1.600.8.500 1.800L20 17l1.800 8.500c.2 1.500-.3 1.800-1.500 1.200L13.500 23l-6.800 3.700c-1.200.6-1.700.3-1.500-1.200L7 17l-5.500-4.700c-1.100-1-.9-1.800.5-1.800h8l2.500-8.300c.3-.7.4-1.200 1-1.200z" /></svg>
              </Favourite>
              <Message>Only do this if you are sure!</Message>
              <Actions>
                <Action $primary>Delete it!</Action>
                <Action>Cancel</Action>
              </Actions>
            </Main>
          </SiteBody>
        </Page>
        <ScrollTrack>
          <svg width="11" height="6" viewBox="0 0 11 6" fill="#505050" aria-hidden><path d="M0 6l5.500-6L11 6z" /></svg>
          <ScrollGap $grow={145} />
          <ScrollThumb />
          <ScrollGap $grow={289} />
          <svg width="11" height="6" viewBox="0 0 11 6" fill="#505050" aria-hidden><path d="M0 0l5.500 6L11 0z" /></svg>
        </ScrollTrack>
      </Viewport>

      <Taskbar>
        <Weather>
          <svg width="30" height="30" viewBox="0 0 30 30" aria-hidden><defs><linearGradient id="sun" x2=".6" y2="1"><stop stopColor="#f3b928" /><stop offset="1" stopColor="#ee6508" /></linearGradient></defs><circle cx="15" cy="15" r="15" fill="url(#sun)" /></svg>
          <Stack><span>78°F</span><Muted>Sunny</Muted></Stack>
        </Weather>
        <Apps>
          <AppSlot aria-label="Start"><App36><defs><linearGradient id="win" gradientUnits="userSpaceOnUse" x2="36" y2="36"><stop stopColor="#8be3ff" /><stop offset="1" stopColor="#0795fb" /></linearGradient></defs><path d="M0 0h17v17H0zM19 0h17v17H19zM0 19h17v17H0zM19 19h17v17H19z" fill="url(#win)" /></App36></AppSlot>
          <SearchButton><Stroke size={22} w={2.400}><circle cx="14" cy="9.500" r="7.500" /><path d="M9 15l-7 7.500" /></Stroke>Search</SearchButton>
          {taskApps.map((a) => (
            <AppSlot key={a.name} aria-label={a.name} $active={a.active}>
              {a.icon}
              {a.badge && <AppBadge><Avatar $color={a.badge} $size={23}>D</Avatar></AppBadge>}
              {a.running && <RunMark $active={a.active} />}
            </AppSlot>
          ))}
        </Apps>
        <Tray>
          <TrayButton aria-label="Show hidden icons"><Stroke size={20} w={1.800}><path d="M2 17L12 7l10 10" /></Stroke></TrayButton>
          <TrayButton aria-label="Dropbox">
            <svg width="24" height="24" viewBox="0 0 24 24" aria-hidden><path d="M6 0l5 3.500L6 7 1 3.500zM18 0l5 3.500L18 7l-5-3.500zM18 8l5 3.500L18 15l-5-3.500zM15 16l3-1v5z" fill="#fff" /><rect x="0" y="10" width="13" height="14" rx="2" fill="#d8102c" /><text x="3" y="21" fontFamily="Open Sans" fontSize="12" fontWeight="700" fill="#fff">3</text></svg>
          </TrayButton>
          <TrayButton aria-label="Sync"><svg width="24" height="24" viewBox="0 0 24 24" fill="none" stroke="#fff" strokeWidth="1.400" aria-hidden><path d="M1 12A11 11 0 0 1 22 7M23 1v7h-7M1 24v-7h7M2 17c3 5 8 7 13 5.500" /><circle cx="18" cy="18" r="6" fill="#0078d7" stroke="none" /></svg></TrayButton>
          <TrayButton $width={68}><Stack $align="center"><span>ENG</span><span>IN</span></Stack></TrayButton>
          <StatusGroup>
            <TrayButton aria-label="Wi-Fi"><Stroke size={24} w={2}><path d="M1 9.500c6-7 16-7 22 0M4.500 13.500c4-5 11-5 15 0M8 17c2-3 6-3 8 0" /><circle cx="12" cy="20" r="2" fill="currentColor" stroke="none" /></Stroke></TrayButton>
            <TrayButton aria-label="Volume"><Stroke size={24} w={1.800}><path d="M1 8.500v7h4.500L11 20.500v-17L5.500 8.500zM14 8.500c1.800 2 1.800 5 0 7M17 6c3 3.500 3 8.500 0 12" /><path d="M20 3.500c4 5 4 12 0 17" opacity=".35" /></Stroke></TrayButton>
            <TrayButton aria-label="Battery"><Stroke size={24} w={2}><rect x="1" y="4.500" width="19" height="15" rx="3" /><rect x="4.500" y="8" width="12" height="8" fill="currentColor" stroke="none" /><path d="M22.500 9.500v5" strokeWidth="3" /></Stroke></TrayButton>
          </StatusGroup>
          <TrayButton $width={100} $end><Stack $align="right"><span>14:44</span><span>18-11-2022</span></Stack></TrayButton>
          <Count>17</Count>
        </Tray>
      </Taskbar>
    </Screen>
  );
}
